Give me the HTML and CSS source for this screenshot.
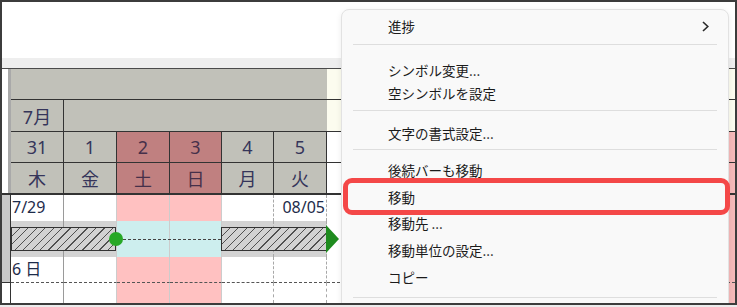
FILE: index.html
```html
<!DOCTYPE html>
<html lang="ja">
<head>
<meta charset="utf-8">
<title>Gantt menu</title>
<link rel="stylesheet" href="styles.css">
</head>
<body>
<div class="frame">
  <div class="top"></div>
  <div class="band"></div>

  <div class="row hA">
    <div class="gut-h"></div>
    <div class="hcell span6"></div>
    <div class="rest cream"></div>
  </div>
  <div class="row hB">
    <div class="gut-h"></div>
    <div class="hcell">7月</div>
    <div class="hcell span5"></div>
    <div class="rest cream"></div>
  </div>
  <div class="row hC">
    <div class="gut-h"></div>
    <div class="hcell">31</div>
    <div class="hcell">1</div>
    <div class="hcell wk">2</div>
    <div class="hcell wk">3</div>
    <div class="hcell">4</div>
    <div class="hcell">5</div>
    <div class="rest pinkedge"></div>
  </div>
  <div class="row hD">
    <div class="gut-h"></div>
    <div class="hcell">木</div>
    <div class="hcell">金</div>
    <div class="hcell wk">土</div>
    <div class="hcell wk">日</div>
    <div class="hcell">月</div>
    <div class="hcell">火</div>
    <div class="rest pinkedge"></div>
  </div>

  <div class="row b1">
    <div class="gut-b"></div>
    <div class="cell ln-solid">7/29</div>
    <div class="cell"></div>
    <div class="cell we"></div>
    <div class="cell we"></div>
    <div class="cell ln-dash"></div>
    <div class="cell ln-dash right">08/05</div>
    <div class="rest-b pinkedge"></div>
  </div>

  <div class="row bar-row">
    <div class="gut-b k1"></div>
    <div class="cell grey ln-solid k2"></div>
    <div class="cell grey k3"></div>
    <div class="cell cyan k4"></div>
    <div class="cell cyan k5"></div>
    <div class="cell grey ln-dash k6"></div>
    <div class="cell grey ln-dash k7"></div>
    <div class="rest-b pinkedge k8"></div>
    <div class="bar bar1"></div>
    <div class="link"><span class="dot"></span><span class="dash"></span></div>
    <div class="bar bar2"></div>
    <div class="arrow"></div>
  </div>

  <div class="row b3">
    <div class="gut-b"></div>
    <div class="cell ln-solid">6 日</div>
    <div class="cell"></div>
    <div class="cell we"></div>
    <div class="cell we"></div>
    <div class="cell ln-dash"></div>
    <div class="cell ln-dash"></div>
    <div class="rest-b pinkedge"></div>
  </div>

  <div class="row b4">
    <div class="gut-b"></div>
    <div class="cell ln-solid"></div>
    <div class="cell"></div>
    <div class="cell we"></div>
    <div class="cell we"></div>
    <div class="cell ln-dash"></div>
    <div class="cell ln-dash"></div>
    <div class="rest-b pinkedge"></div>
  </div>

  <div class="menu">
    <div class="item h24">進捗
      <svg class="chev" width="7" height="11" viewBox="0 0 7 11"><polyline points="1,1 5.8,5.5 1,10" fill="none" stroke="#2a2a2a" stroke-width="1.6"/></svg>
    </div>
    <div class="sep sep1"></div>
    <div class="item h23">シンボル変更...</div>
    <div class="item h23">空シンボルを設定</div>
    <div class="sep sep2"></div>
    <div class="item h24">文字の書式設定...</div>
    <div class="sep sep3"></div>
    <div class="item">後続バーも移動</div>
    <div class="item hl">移動</div>
    <div class="item">移動先 ...</div>
    <div class="item">移動単位の設定...</div>
    <div class="item">コピー</div>
    <div class="sep sep4"></div>
  </div>
</div>
</body>
</html>
```

FILE: styles.css
```css
* { box-sizing: border-box; }
html, body { margin: 0; padding: 0; }
body {
  background: #ececec;
  font-family: "Noto Sans", "Noto Sans CJK JP", sans-serif;
}

.frame {
  position: relative;
  width: 737px;
  height: 305px;
  border: 2px solid #3c3c3c;
  background: #fff;
  overflow: hidden;
}

.top { height: 56px; background: #fff; }
.band { height: 11px; background: #eeeeee; border-bottom: 1px solid #4a4a4a; }

.row {
  display: grid;
  grid-template-columns: 9px 53px 53px 53px 52px 52px 53px 1fr;
}

/* header rows */
.hA { height: 31px; }
.hB { height: 32px; }
.hC { height: 31px; }
.hD { height: 32px; border-bottom: 2px solid #333; }

.gut-h { background: #fff; border-right: 3px solid #a9a9a9; }

.hcell {
  background: #c1c1b9;
  border-right: 1px solid #333;
  border-bottom: 1px solid #333;
  display: flex;
  align-items: center;
  justify-content: center;
  font-size: 18px;
  color: #35355a;
}
.hD .hcell { border-bottom: 0; }
.hcell.wk { background: #c08080; color: #46304a; }
.span6 { grid-column: span 6; border-right: 0; }
.span5 { grid-column: span 5; border-right: 0; }

.rest { border-bottom: 1px solid #333; }
.hD .rest { border-bottom: 0; }
.cream { background: #fcfcef; }
.pinkedge { background: linear-gradient(to right, #fff calc(100% - 6px), #f5b9b9 calc(100% - 6px)); }

/* body rows */
.b1 { height: 26px; }
.bar-row { height: 36px; }
.b3 { height: 26px; }
.b4 { height: 20px; }

.gut-b { background: #c8c8c8; border-right: 1px solid #333; }
.b4 .gut-b { background: #fff; }

.cell {
  font-size: 16px;
  line-height: 25px;
  color: #1d2b4a;
  padding: 0 1px;
  white-space: nowrap;
  border-right: 1px solid #cccccc;
}
.ln-solid { border-right-color: #9a9a9a; }
.ln-dash { border-right: 1px dashed #a8a8a8; }
.we { background: #ffc1c1; }
.right { text-align: right; }

.b3 > * { border-bottom: 1px dashed #555; }
.b3 > .gut-b { border-bottom: 1px solid #333; }

/* bar row: cells and bars share one grid row */
.bar-row > * { grid-row: 1; }
.k1 { grid-column: 1; }
.k2 { grid-column: 2; }
.k3 { grid-column: 3; }
.k4 { grid-column: 4; }
.k5 { grid-column: 5; }
.k6 { grid-column: 6; }
.k7 { grid-column: 7; }
.k8 { grid-column: 8; }
.grey { background: #d3d3d3; }
.cyan { background: #cdeeee; }

.bar {
  align-self: center;
  height: 24px;
  border: 1px solid #333;
  background: repeating-linear-gradient(135deg, #d2d2d2 0 5px, #505050 5px 6px);
}
.bar1 { grid-column: 2 / 4; width: 105px; }
.bar2 { grid-column: 6 / 8; margin-left: -1px; }

.link {
  grid-column: 4 / 6;
  align-self: center;
  display: flex;
  align-items: center;
  height: 14px;
}
.dot {
  flex: none;
  width: 14px;
  height: 14px;
  border-radius: 50%;
  background: #26a826;
  margin-left: -8px;
}
.dash { flex: 1; border-top: 1px dashed #444; margin-right: 1px; }

.arrow {
  grid-column: 8;
  align-self: center;
  justify-self: start;
  width: 0;
  height: 0;
  margin-left: -1px;
  border-left: 13px solid #1e8b1e;
  border-top: 14px solid transparent;
  border-bottom: 14px solid transparent;
}

/* context menu */
.menu {
  position: absolute;
  left: 339px;
  top: 7px;
  width: 388px;
  height: 330px;
  padding-top: 4px;
  background: #f9f9f9;
  border: 1px solid #e2e2e2;
  border-radius: 8px;
  box-shadow: 0 2px 6px rgba(0, 0, 0, 0.08);
  font-family: "Noto Sans CJK JP", "Noto Sans", sans-serif;
  font-size: 13.5px;
  color: #1b1b1b;
}
.item {
  display: flex;
  align-items: center;
  height: 26.6px;
  padding-left: 46px;
  white-space: nowrap;
}
.item.h24 { height: 24px; }
.item.h23 { height: 23px; }
.chev { margin-left: auto; margin-right: 19px; }

.sep { height: 1px; background: #dedede; margin: 0 11px; }
.sep1 { margin-top: 6px; margin-bottom: 13px; }
.sep2 { margin-top: 6px; margin-bottom: 10px; }
.sep3 { margin-top: 4px; margin-bottom: 7px; }
.sep4 { margin-top: 6.7px; }

.item.hl { position: relative; }
.item.hl::after {
  content: "";
  position: absolute;
  top: -6px;
  bottom: -5px;
  left: 1px;
  right: -2px;
  border: 5px solid #f44848;
  border-radius: 9px;
}
```
